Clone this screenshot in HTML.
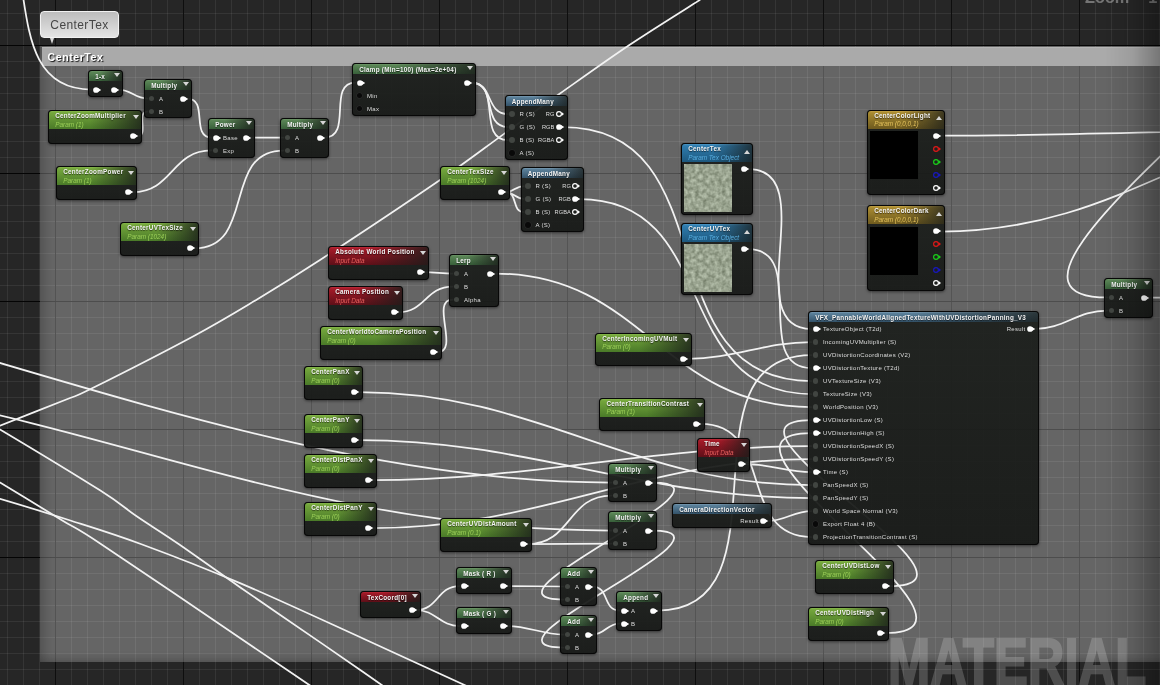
<!DOCTYPE html><html><head><meta charset="utf-8"><title>CenterTex material graph</title><style>
*{box-sizing:border-box;margin:0;padding:0}
html,body{width:1160px;height:685px;overflow:hidden;background:#262626}
body{position:relative;font-family:"Liberation Sans",sans-serif;color:#fff}
#root{position:absolute;left:0;top:0;width:1160px;height:685px;overflow:hidden;will-change:transform}
#bg{position:absolute;left:0;top:0;width:1160px;height:685px;
background-image:
linear-gradient(to bottom,#040404 1px,transparent 1px),linear-gradient(to right,#0e0e0e 1px,transparent 1px),
linear-gradient(to bottom,rgba(255,255,255,.072) 1px,transparent 1px),linear-gradient(to right,rgba(255,255,255,.072) 1px,transparent 1px);
background-size:100% 128px,128px 100%,100% 16px,16px 100%;
background-position:0 45px,55px 0,0 13px,7px 0}
#cm{position:absolute;left:40px;top:46px;width:1122px;height:616px;background:rgba(255,255,255,.295);
box-shadow:inset 14px 0 12px -10px rgba(0,0,0,.22),inset 0 -10px 10px -8px rgba(0,0,0,.22)}
#cmh{position:absolute;left:42px;top:47.4px;width:1119px;height:18.4px;background:#aaa;border-top:1px solid #b6b6b6;
font-weight:bold;font-size:10.6px;letter-spacing:.55px;line-height:18px;padding-left:5.5px;text-shadow:1px 1px 1px rgba(0,0,0,.9)}
#vg{position:absolute;left:1105px;top:0;width:55px;height:685px;background:linear-gradient(to right,rgba(0,0,0,0),rgba(0,0,0,.08) 50%,rgba(0,0,0,.30))}
#tip{position:absolute;left:40px;top:11px;width:79px;height:27px;border-radius:4px;border:1px solid #f2f2f2;
background:linear-gradient(#bdbdbd,#e4e4e4);color:#464646;font-size:12px;letter-spacing:.4px;line-height:27px;text-align:center}
#tipa{position:absolute;left:49.5px;top:38px;width:0;height:0;border-left:2.5px solid transparent;border-right:2.5px solid transparent;border-top:6px solid #d8d8d8}
#zoom{position:absolute;left:1085px;top:-11px;word-spacing:9px;font-size:16.3px;line-height:16px;font-weight:bold;color:rgba(255,255,255,.36);white-space:nowrap}
#wm{position:absolute;left:888px;top:629px;font-size:66px;font-weight:bold;color:#fff;-webkit-text-stroke:2.2px #fff;opacity:.19;white-space:nowrap;line-height:66px;transform-origin:0 0;transform:scaleX(.768)}
.n{position:absolute;border-radius:4px;background:linear-gradient(rgba(29,32,29,.94),rgba(23,25,23,.94));box-shadow:inset 0 0 0 1px rgba(6,6,6,.95),0 1px 3px rgba(0,0,0,.5);overflow:hidden}
.h{position:absolute;left:1px;top:1px;right:1px;border-radius:3px 3px 0 0;font-weight:bold;font-size:6.3px;line-height:9px;padding:1.1px 0 0 6.2px;white-space:nowrap;letter-spacing:.28px;text-shadow:0 1px 1px rgba(0,0,0,.6);color:#f4f4f4}
.h.s{padding-top:0}
.h i{display:block;font-weight:normal;font-size:6.4px;line-height:8px;letter-spacing:0;text-shadow:none;margin-top:.8px}
.g .h{background:linear-gradient(to right,rgba(26,29,26,0) 35%,rgba(26,29,26,.8) 100%),linear-gradient(#6f9a6a 0,#5a8556 12%,#38603a 100%)}
.p .h{background:linear-gradient(to right,rgba(26,29,26,0) 45%,rgba(26,29,26,.8) 100%),linear-gradient(#86b84a 0,#74a63c 10%,#4a7a28 100%)}
.p .h i{color:#9cd058}
.r .h{background:linear-gradient(to right,rgba(26,29,26,0) 40%,rgba(26,29,26,.8) 100%),linear-gradient(#c02a3a 0,#a41a28 10%,#5e0f18 100%)}
.r .h i{color:#e8605e}
.b .h{background:linear-gradient(to right,rgba(26,29,26,0) 45%,rgba(26,29,26,.75) 100%),linear-gradient(#4e98c6 0,#2f7cae 10%,#1d587e 100%)}
.b .h i{color:#58aee0}
.f .h{background:linear-gradient(to right,rgba(26,29,26,0) 45%,rgba(26,29,26,.75) 100%),linear-gradient(#7c9db4 0,#5b819b 12%,#34536a 100%)}
.y .h{background:linear-gradient(to right,rgba(26,29,26,0) 45%,rgba(26,29,26,.75) 100%),linear-gradient(#c4a244 0,#a88a30 10%,#6e5a1e 100%)}
.y .h i{color:#e4c25c}
.ar{position:absolute;width:0;height:0;border-left:3px solid transparent;border-right:3px solid transparent;border-top:4.5px solid #d6d6d6}
.ar.up{border-top:none;border-bottom:4.5px solid #d6d6d6}
.l{position:absolute;font-size:6px;line-height:8px;color:#dedede;white-space:nowrap;letter-spacing:.3px}
.lo{font-size:5.7px;letter-spacing:.1px}
.pin{position:absolute;width:5.8px;height:5.8px;border-radius:50%}
.ps{position:absolute;overflow:visible}
.c1{background:#fff}
.c1:after{content:"";position:absolute;left:4.6px;top:1px;border-top:2px solid transparent;border-bottom:2px solid transparent;border-left:3px solid #fff}
.c2{background:#414541}
.c0{background:#090909;box-shadow:0 0 0 .6px #2c2c2c}
.c3{background:transparent;border:1.1px solid #fff}
.c3:after{content:"";position:absolute;left:3.9px;top:.3px;border-top:1.6px solid transparent;border-bottom:1.6px solid transparent;border-left:2.6px solid #fff}
.cR,.cG,.cB{background:transparent;border:1.1px solid #e01818}
.cG{border-color:#1ad01a}
.cB{border-color:#1616b8}
.cR:after,.cG:after,.cB:after{content:"";position:absolute;left:3.9px;top:.3px;border-top:1.6px solid transparent;border-bottom:1.6px solid transparent;border-left:2.6px solid #e01818}
.cG:after{border-left-color:#1ad01a}
.cB:after{border-left-color:#1616b8}
.sw{position:absolute;left:3px;top:21.3px;width:48px;height:48px;background:#000}
.tx{position:absolute;left:3px;top:21.3px;width:48px;height:48px;background:#9aa48f;overflow:hidden}
svg{position:absolute;left:0;top:0}
</style></head><body>
<div id="root"><div id="bg"></div>
<div id="zoom">Zoom -1</div>
<div id="cm"></div><div id="cmh">CenterTex</div>
<div id="wm">MATERIAL</div>
<svg width="0" height="0"><symbol id="pf" viewBox="-4 -4 10 8"><circle r="2.85" fill="currentColor"/><path d="M2 -2.1L5.2 0L2 2.1z" fill="currentColor"/></symbol><symbol id="ph" viewBox="-4 -4 10 8"><circle r="2.4" fill="none" stroke="currentColor" stroke-width="1.15"/><path d="M2.6 -1.9L5 0L2.6 1.9z" fill="currentColor"/></symbol><filter id="tn" x="0" y="0" width="100%" height="100%" color-interpolation-filters="sRGB"><feTurbulence type="fractalNoise" baseFrequency=".26" numOctaves="2" seed="4"/><feColorMatrix values=".4 0 0 0 .40 .4 0 0 0 .44 .4 0 0 0 .36 0 0 0 0 1"/></filter></svg>
<svg width="1160" height="685" viewBox="0 0 1160 685" fill="none" stroke="#f2f2f2" stroke-width="1.75" stroke-linecap="round">
<path d="M118.5 89.5C131.2 89.5 134.8 98.5 147.5 98.5"/>
<path d="M137.5 136.2C149.1 136.2 135.9 111.5 147.5 111.5"/>
<path d="M187.5 98.5C208.5 98.5 190.5 137.5 211.5 137.5"/>
<path d="M132.5 192.2C172.7 192.2 171.3 150.5 211.5 150.5"/>
<path d="M250.5 137.5C261.5 137.5 272.5 137.5 283.5 137.5"/>
<path d="M194.5 248.2C256.7 248.2 221.3 150.5 283.5 150.5"/>
<path d="M324.5 137.5C353.2 137.5 326.8 82.5 355.5 82.5"/>
<path d="M471.0 82.5C493.8 82.5 485.2 114.0 508.0 114.0"/>
<path d="M471.0 82.5C498.2 82.5 480.8 127.0 508.0 127.0"/>
<path d="M471.0 82.5C502.5 82.5 476.5 140.0 508.0 140.0"/>
<path d="M505.5 192.2C513.7 192.2 515.8 186.0 524.0 186.0"/>
<path d="M505.5 192.2C513.9 192.2 515.6 199.0 524.0 199.0"/>
<path d="M505.5 192.2C518.3 192.2 511.2 212.0 524.0 212.0"/>
<path d="M424.5 272.2C434.3 272.2 442.7 273.5 452.5 273.5"/>
<path d="M398.5 312.2C425.1 312.2 425.9 286.5 452.5 286.5"/>
<path d="M437.5 352.2C460.1 352.2 429.9 299.5 452.5 299.5"/>
<path d="M416.0 610.0C438.5 610.0 437.0 586.0 459.5 586.0"/>
<path d="M416.0 610.0C435.8 610.0 439.7 626.0 459.5 626.0"/>
<path d="M507.5 586.0C526.3 586.0 544.7 586.5 563.5 586.5"/>
<path d="M507.5 626.0C529.0 626.0 542.0 634.5 563.5 634.5"/>
<path d="M592.5 586.5C609.5 586.5 602.5 610.5 619.5 610.5"/>
<path d="M592.5 634.5C605.2 634.5 606.8 623.5 619.5 623.5"/>
<path d="M652.5 482.5C753.4 482.5 462.6 599.5 563.5 599.5"/>
<path d="M652.5 530.5C753.4 530.5 462.6 647.5 563.5 647.5"/>
<path d="M527.5 544.2C571.7 544.2 567.3 495.5 611.5 495.5"/>
<path d="M527.5 544.2C555.7 544.2 583.3 543.5 611.5 543.5"/>
<path d="M748.5 169.2C822.8 169.2 737.2 329.0 811.5 329.0"/>
<path d="M687.5 358.8C734.4 358.8 764.6 342.0 811.5 342.0"/>
<path d="M657.5 610.5C794.0 610.5 675.0 355.0 811.5 355.0"/>
<path d="M748.5 249.2C809.1 249.2 750.9 368.0 811.5 368.0"/>
<path d="M563.0 127.0C730.5 127.0 644.0 381.0 811.5 381.0"/>
<path d="M579.5 199.0C721.8 199.0 669.2 394.0 811.5 394.0"/>
<path d="M494.5 273.5C644.7 273.5 661.3 407.0 811.5 407.0"/>
<path d="M889.5 586.2C1009.2 586.2 691.8 420.0 811.5 420.0"/>
<path d="M884.5 633.2C1018.3 633.2 677.7 433.0 811.5 433.0"/>
<path d="M372.5 480.2C530.2 480.2 653.8 446.0 811.5 446.0"/>
<path d="M372.5 528.2C541.9 528.2 642.1 459.0 811.5 459.0"/>
<path d="M745.5 464.2C770.1 464.2 786.9 472.0 811.5 472.0"/>
<path d="M358.5 392.2C540.4 392.2 629.6 485.0 811.5 485.0"/>
<path d="M358.5 440.2C528.8 440.2 641.2 498.0 811.5 498.0"/>
<path d="M767.5 521.0C785.5 521.0 793.5 511.0 811.5 511.0"/>
<path d="M700.8 423.8C775.4 423.8 736.9 537.0 811.5 537.0"/>
<path d="M1034.0 329.0C1064.7 329.0 1076.8 310.5 1107.5 310.5"/>
<path d="M-46.0 -100.0C63.0 -100.0 -17.5 89.5 91.5 89.5"/>
<path d="M-633.6 237.0C-218.4 237.0 196.3 482.5 611.5 482.5"/>
<path d="M-330.2 373.7C36.0 373.7 245.3 530.5 611.5 530.5"/>
<path d="M1148.5 297.5C1199.2 297.5 1249.3 298.0 1300.0 298.0"/>
<path d="M940.5 135.7C1074.0 135.7 1201.5 129.7 1335.0 129.7"/>
<path d="M940.5 231.5C1132.2 231.5 1207.3 114.8 1399.0 114.8"/>
<path d="M1302.9 -71.1C1496.6 -71.1 913.8 297.5 1107.5 297.5"/>
<path d="M0.0 425.6C10.8 421.3 49.7 406.2 65.0 400.0C80.3 393.8 70.3 399.1 91.6 388.5C112.9 377.9 165.4 351.2 193.0 336.4C220.6 321.5 235.8 312.1 257.0 299.4C278.2 286.7 289.5 279.9 320.0 260.0C350.5 240.1 409.5 200.9 440.0 180.0C470.5 159.1 483.0 149.0 503.0 134.6C523.0 120.2 538.9 108.4 560.0 93.5C581.1 78.6 606.1 60.6 629.4 45.0C652.7 29.4 688.1 7.5 699.8 0.0"/>
<path d="M-60.0 395.0C-50.0 400.7 -26.7 413.5 0.0 429.4C26.7 445.3 77.3 475.9 100.0 490.3C122.7 504.7 123.2 507.1 136.3 516.0C149.4 525.0 161.3 532.1 178.6 544.0C195.9 555.9 216.0 570.5 240.0 587.2C264.0 603.9 299.2 627.8 322.8 644.1C346.4 660.4 362.2 671.4 381.7 685.0C401.2 698.6 430.3 719.2 440.0 726.0"/>
<path d="M-60.0 447.0C-50.0 452.9 -20.2 470.2 0.0 482.4C20.2 494.6 44.7 509.7 61.5 520.0C78.3 530.3 71.2 524.3 100.9 544.0C130.7 563.7 205.3 614.5 240.0 638.0C274.7 661.5 289.3 671.5 309.3 685.0C329.3 698.5 351.6 713.3 360.0 719.0"/>
<path d="M-60.0 482.0C-50.0 484.8 -21.5 492.5 0.0 498.8C21.5 505.1 45.3 512.5 68.8 520.0C92.3 527.5 112.3 533.5 140.8 544.0C169.3 554.5 202.8 567.3 240.0 583.1C277.2 598.9 326.7 622.0 364.1 639.0C401.5 656.0 438.5 673.0 464.5 685.0C490.5 697.0 510.8 706.7 520.0 711.0"/>
</svg>
<div class="n g" style="left:88px;top:70px;width:35px;height:27px"><div class="h" style="height:10px">1-x</div><div class="ar" style="left:26px;top:3px"></div><svg class="ps" style="left:3.5px;top:15.5px;color:#fff" width="10" height="8"><use href="#pf"/></svg><svg class="ps" style="left:22.0px;top:15.5px;color:#fff" width="10" height="8"><use href="#pf"/></svg></div>
<div class="n g" style="left:144px;top:79px;width:48px;height:39px"><div class="h" style="height:10px">Multiply</div><div class="ar" style="left:39px;top:3px"></div><div class="pin c2" style="left:4.6px;top:16.6px"></div><div class="l" style="left:15px;top:15.5px">A</div><div class="pin c2" style="left:4.6px;top:29.6px"></div><div class="l" style="left:15px;top:28.5px">B</div><svg class="ps" style="left:35.0px;top:15.5px;color:#fff" width="10" height="8"><use href="#pf"/></svg></div>
<div class="n p" style="left:48px;top:110px;width:94px;height:33.5px"><div class="h s" style="height:18px">CenterZoomMultiplier<i>Param (1)</i></div><div class="ar" style="left:85.3px;top:5.3px"></div><svg class="ps" style="left:81.0px;top:22.2px;color:#fff" width="10" height="8"><use href="#pf"/></svg></div>
<div class="n g" style="left:208px;top:118px;width:47px;height:40px"><div class="h" style="height:10px">Power</div><div class="ar" style="left:38px;top:3px"></div><svg class="ps" style="left:3.5px;top:15.5px;color:#fff" width="10" height="8"><use href="#pf"/></svg><div class="l" style="left:15px;top:15.5px">Base</div><div class="pin c2" style="left:4.6px;top:29.6px"></div><div class="l" style="left:15px;top:28.5px">Exp</div><svg class="ps" style="left:34.0px;top:15.5px;color:#fff" width="10" height="8"><use href="#pf"/></svg></div>
<div class="n g" style="left:280px;top:118px;width:49px;height:40px"><div class="h" style="height:10px">Multiply</div><div class="ar" style="left:40px;top:3px"></div><div class="pin c2" style="left:4.6px;top:16.6px"></div><div class="l" style="left:15px;top:15.5px">A</div><div class="pin c2" style="left:4.6px;top:29.6px"></div><div class="l" style="left:15px;top:28.5px">B</div><svg class="ps" style="left:36.0px;top:15.5px;color:#fff" width="10" height="8"><use href="#pf"/></svg></div>
<div class="n p" style="left:56px;top:166px;width:81px;height:33.5px"><div class="h s" style="height:18px">CenterZoomPower<i>Param (1)</i></div><div class="ar" style="left:72.3px;top:5.3px"></div><svg class="ps" style="left:68.0px;top:22.2px;color:#fff" width="10" height="8"><use href="#pf"/></svg></div>
<div class="n p" style="left:120px;top:222px;width:79px;height:33.5px"><div class="h s" style="height:18px">CenterUVTexSize<i>Param (1024)</i></div><div class="ar" style="left:70.3px;top:5.3px"></div><svg class="ps" style="left:66.0px;top:22.2px;color:#fff" width="10" height="8"><use href="#pf"/></svg></div>
<div class="n g" style="left:352px;top:63px;width:123.5px;height:52.5px"><div class="h" style="height:10px">Clamp (Min=100) (Max=2e+04)</div><div class="ar" style="left:114.5px;top:3px"></div><svg class="ps" style="left:3.5px;top:15.5px;color:#fff" width="10" height="8"><use href="#pf"/></svg><div class="pin c0" style="left:4.6px;top:29.6px"></div><div class="l" style="left:15px;top:28.5px">Min</div><div class="pin c0" style="left:4.6px;top:42.6px"></div><div class="l" style="left:15px;top:41.5px">Max</div><svg class="ps" style="left:110.5px;top:15.5px;color:#fff" width="10" height="8"><use href="#pf"/></svg></div>
<div class="n f" style="left:504.5px;top:94.5px;width:63px;height:65px"><div class="h" style="height:10px">AppendMany</div><div class="pin c2" style="left:4.6px;top:16.6px"></div><div class="l" style="left:15px;top:15.5px">R (S)</div><div class="pin c2" style="left:4.6px;top:29.6px"></div><div class="l" style="left:15px;top:28.5px">G (S)</div><div class="pin c2" style="left:4.6px;top:42.6px"></div><div class="l" style="left:15px;top:41.5px">B (S)</div><div class="pin c0" style="left:4.6px;top:55.6px"></div><div class="l" style="left:15px;top:54.5px">A (S)</div><svg class="ps" style="left:50.0px;top:15.5px;color:#fff" width="10" height="8"><use href="#ph"/></svg><div class="l lo" style="right:13px;top:15.5px">RG</div><svg class="ps" style="left:50.0px;top:28.5px;color:#fff" width="10" height="8"><use href="#pf"/></svg><div class="l lo" style="right:13px;top:28.5px">RGB</div><svg class="ps" style="left:50.0px;top:41.5px;color:#fff" width="10" height="8"><use href="#ph"/></svg><div class="l lo" style="right:13px;top:41.5px">RGBA</div></div>
<div class="n p" style="left:440px;top:166px;width:70px;height:33.5px"><div class="h s" style="height:18px">CenterTexSize<i>Param (1024)</i></div><div class="ar" style="left:61.3px;top:5.3px"></div><svg class="ps" style="left:57.0px;top:22.2px;color:#fff" width="10" height="8"><use href="#pf"/></svg></div>
<div class="n f" style="left:520.5px;top:166.5px;width:63.5px;height:65px"><div class="h" style="height:10px">AppendMany</div><div class="pin c2" style="left:4.6px;top:16.6px"></div><div class="l" style="left:15px;top:15.5px">R (S)</div><div class="pin c2" style="left:4.6px;top:29.6px"></div><div class="l" style="left:15px;top:28.5px">G (S)</div><div class="pin c2" style="left:4.6px;top:42.6px"></div><div class="l" style="left:15px;top:41.5px">B (S)</div><div class="pin c0" style="left:4.6px;top:55.6px"></div><div class="l" style="left:15px;top:54.5px">A (S)</div><svg class="ps" style="left:50.5px;top:15.5px;color:#fff" width="10" height="8"><use href="#ph"/></svg><div class="l lo" style="right:13px;top:15.5px">RG</div><svg class="ps" style="left:50.5px;top:28.5px;color:#fff" width="10" height="8"><use href="#pf"/></svg><div class="l lo" style="right:13px;top:28.5px">RGB</div><svg class="ps" style="left:50.5px;top:41.5px;color:#fff" width="10" height="8"><use href="#ph"/></svg><div class="l lo" style="right:13px;top:41.5px">RGBA</div></div>
<div class="n r" style="left:328px;top:246px;width:101px;height:34px"><div class="h s" style="height:18px">Absolute World Position<i>Input Data</i></div><div class="ar" style="left:92.3px;top:5.3px"></div><svg class="ps" style="left:88.0px;top:22.2px;color:#fff" width="10" height="8"><use href="#pf"/></svg></div>
<div class="n g" style="left:449px;top:254px;width:50px;height:53px"><div class="h" style="height:10px">Lerp</div><div class="ar" style="left:41px;top:3px"></div><div class="pin c2" style="left:4.6px;top:16.6px"></div><div class="l" style="left:15px;top:15.5px">A</div><div class="pin c2" style="left:4.6px;top:29.6px"></div><div class="l" style="left:15px;top:28.5px">B</div><div class="pin c2" style="left:4.6px;top:42.6px"></div><div class="l" style="left:15px;top:41.5px">Alpha</div><svg class="ps" style="left:37.0px;top:15.5px;color:#fff" width="10" height="8"><use href="#pf"/></svg></div>
<div class="n r" style="left:328px;top:286px;width:75px;height:33.5px"><div class="h s" style="height:18px">Camera Position<i>Input Data</i></div><div class="ar" style="left:66.3px;top:5.3px"></div><svg class="ps" style="left:62.0px;top:22.2px;color:#fff" width="10" height="8"><use href="#pf"/></svg></div>
<div class="n p" style="left:320px;top:326px;width:122px;height:34px"><div class="h s" style="height:18px">CenterWorldtoCameraPosition<i>Param (0)</i></div><div class="ar" style="left:113.3px;top:5.3px"></div><svg class="ps" style="left:109.0px;top:22.2px;color:#fff" width="10" height="8"><use href="#pf"/></svg></div>
<div class="n p" style="left:304px;top:366px;width:59px;height:33.5px"><div class="h s" style="height:18px">CenterPanX<i>Param (0)</i></div><div class="ar" style="left:50.3px;top:5.3px"></div><svg class="ps" style="left:46.0px;top:22.2px;color:#fff" width="10" height="8"><use href="#pf"/></svg></div>
<div class="n p" style="left:304px;top:414px;width:59px;height:33.5px"><div class="h s" style="height:18px">CenterPanY<i>Param (0)</i></div><div class="ar" style="left:50.3px;top:5.3px"></div><svg class="ps" style="left:46.0px;top:22.2px;color:#fff" width="10" height="8"><use href="#pf"/></svg></div>
<div class="n p" style="left:304px;top:454px;width:73px;height:33.5px"><div class="h s" style="height:18px">CenterDistPanX<i>Param (0)</i></div><div class="ar" style="left:64.3px;top:5.3px"></div><svg class="ps" style="left:60.0px;top:22.2px;color:#fff" width="10" height="8"><use href="#pf"/></svg></div>
<div class="n p" style="left:304px;top:502px;width:73px;height:33.5px"><div class="h s" style="height:18px">CenterDistPanY<i>Param (0)</i></div><div class="ar" style="left:64.3px;top:5.3px"></div><svg class="ps" style="left:60.0px;top:22.2px;color:#fff" width="10" height="8"><use href="#pf"/></svg></div>
<div class="n p" style="left:440px;top:518px;width:92px;height:33.5px"><div class="h s" style="height:18px">CenterUVDistAmount<i>Param (0.1)</i></div><div class="ar" style="left:83.3px;top:5.3px"></div><svg class="ps" style="left:79.0px;top:22.2px;color:#fff" width="10" height="8"><use href="#pf"/></svg></div>
<div class="n g" style="left:608px;top:463px;width:49px;height:39px"><div class="h" style="height:10px">Multiply</div><div class="ar" style="left:40px;top:3px"></div><div class="pin c2" style="left:4.6px;top:16.6px"></div><div class="l" style="left:15px;top:15.5px">A</div><div class="pin c2" style="left:4.6px;top:29.6px"></div><div class="l" style="left:15px;top:28.5px">B</div><svg class="ps" style="left:36.0px;top:15.5px;color:#fff" width="10" height="8"><use href="#pf"/></svg></div>
<div class="n g" style="left:608px;top:511px;width:49px;height:39px"><div class="h" style="height:10px">Multiply</div><div class="ar" style="left:40px;top:3px"></div><div class="pin c2" style="left:4.6px;top:16.6px"></div><div class="l" style="left:15px;top:15.5px">A</div><div class="pin c2" style="left:4.6px;top:29.6px"></div><div class="l" style="left:15px;top:28.5px">B</div><svg class="ps" style="left:36.0px;top:15.5px;color:#fff" width="10" height="8"><use href="#pf"/></svg></div>
<div class="n g" style="left:456px;top:566.5px;width:56px;height:27px"><div class="h" style="height:10px">Mask ( R )</div><div class="ar" style="left:47px;top:3px"></div><svg class="ps" style="left:3.5px;top:15.5px;color:#fff" width="10" height="8"><use href="#pf"/></svg><svg class="ps" style="left:43.0px;top:15.5px;color:#fff" width="10" height="8"><use href="#pf"/></svg></div>
<div class="n g" style="left:456px;top:606.5px;width:56px;height:27px"><div class="h" style="height:10px">Mask ( G )</div><div class="ar" style="left:47px;top:3px"></div><svg class="ps" style="left:3.5px;top:15.5px;color:#fff" width="10" height="8"><use href="#pf"/></svg><svg class="ps" style="left:43.0px;top:15.5px;color:#fff" width="10" height="8"><use href="#pf"/></svg></div>
<div class="n r" style="left:360px;top:590.5px;width:60.5px;height:27.3px"><div class="h" style="height:10px">TexCoord[0]</div><div class="ar" style="left:51.5px;top:3px"></div><svg class="ps" style="left:47.5px;top:15.5px;color:#fff" width="10" height="8"><use href="#pf"/></svg></div>
<div class="n g" style="left:560px;top:567px;width:37px;height:39px"><div class="h" style="height:10px">Add</div><div class="ar" style="left:28px;top:3px"></div><div class="pin c2" style="left:4.6px;top:16.6px"></div><div class="l" style="left:15px;top:15.5px">A</div><div class="pin c2" style="left:4.6px;top:29.6px"></div><div class="l" style="left:15px;top:28.5px">B</div><svg class="ps" style="left:24.0px;top:15.5px;color:#fff" width="10" height="8"><use href="#pf"/></svg></div>
<div class="n g" style="left:560px;top:615px;width:37px;height:39px"><div class="h" style="height:10px">Add</div><div class="ar" style="left:28px;top:3px"></div><div class="pin c2" style="left:4.6px;top:16.6px"></div><div class="l" style="left:15px;top:15.5px">A</div><div class="pin c2" style="left:4.6px;top:29.6px"></div><div class="l" style="left:15px;top:28.5px">B</div><svg class="ps" style="left:24.0px;top:15.5px;color:#fff" width="10" height="8"><use href="#pf"/></svg></div>
<div class="n g" style="left:616px;top:591px;width:46px;height:40px"><div class="h" style="height:10px">Append</div><div class="ar" style="left:37px;top:3px"></div><svg class="ps" style="left:3.5px;top:15.5px;color:#fff" width="10" height="8"><use href="#pf"/></svg><div class="l" style="left:15px;top:15.5px">A</div><svg class="ps" style="left:3.5px;top:28.5px;color:#fff" width="10" height="8"><use href="#pf"/></svg><div class="l" style="left:15px;top:28.5px">B</div><svg class="ps" style="left:33.0px;top:15.5px;color:#fff" width="10" height="8"><use href="#pf"/></svg></div>
<div class="n b" style="left:681px;top:143px;width:72px;height:72px"><div class="h s" style="height:18px">CenterTex<i>Param Tex Object</i></div><div class="ar up" style="left:63.3px;top:6.9px"></div><div class="tx"><svg width="48" height="48" viewBox="0 0 48 48"><rect width="48" height="48" fill="#fff" filter="url(#tn)"/></svg></div><svg class="ps" style="left:59.0px;top:22.2px;color:#fff" width="10" height="8"><use href="#pf"/></svg></div>
<div class="n b" style="left:681px;top:223px;width:72px;height:72px"><div class="h s" style="height:18px">CenterUVTex<i>Param Tex Object</i></div><div class="ar up" style="left:63.3px;top:6.9px"></div><div class="tx"><svg width="48" height="48" viewBox="0 0 48 48"><rect width="48" height="48" fill="#fff" filter="url(#tn)"/></svg></div><svg class="ps" style="left:59.0px;top:22.2px;color:#fff" width="10" height="8"><use href="#pf"/></svg></div>
<div class="n y" style="left:867px;top:109.5px;width:78px;height:85px"><div class="h s" style="height:18px">CenterColorLight<i>Param (0,0,0,1)</i></div><div class="ar up" style="left:69.3px;top:6.9px"></div><div class="sw"></div><svg class="ps" style="left:65.0px;top:22.2px;color:#fff" width="10" height="8"><use href="#pf"/></svg><svg class="ps" style="left:65.0px;top:35.2px;color:#e01818" width="10" height="8"><use href="#ph"/></svg><svg class="ps" style="left:65.0px;top:48.2px;color:#1ad01a" width="10" height="8"><use href="#ph"/></svg><svg class="ps" style="left:65.0px;top:61.2px;color:#1818c0" width="10" height="8"><use href="#ph"/></svg><svg class="ps" style="left:65.0px;top:74.2px;color:#fff" width="10" height="8"><use href="#ph"/></svg></div>
<div class="n y" style="left:867px;top:205.3px;width:78px;height:85.5px"><div class="h s" style="height:18px">CenterColorDark<i>Param (0,0,0,1)</i></div><div class="ar up" style="left:69.3px;top:6.9px"></div><div class="sw"></div><svg class="ps" style="left:65.0px;top:22.2px;color:#fff" width="10" height="8"><use href="#pf"/></svg><svg class="ps" style="left:65.0px;top:35.2px;color:#e01818" width="10" height="8"><use href="#ph"/></svg><svg class="ps" style="left:65.0px;top:48.2px;color:#1ad01a" width="10" height="8"><use href="#ph"/></svg><svg class="ps" style="left:65.0px;top:61.2px;color:#1818c0" width="10" height="8"><use href="#ph"/></svg><svg class="ps" style="left:65.0px;top:74.2px;color:#fff" width="10" height="8"><use href="#ph"/></svg></div>
<div class="n g" style="left:1104px;top:278px;width:49px;height:40px"><div class="h" style="height:10px">Multiply</div><div class="ar" style="left:40px;top:3px"></div><div class="pin c2" style="left:4.6px;top:16.6px"></div><div class="l" style="left:15px;top:15.5px">A</div><div class="pin c2" style="left:4.6px;top:29.6px"></div><div class="l" style="left:15px;top:28.5px">B</div><svg class="ps" style="left:36.0px;top:15.5px;color:#fff" width="10" height="8"><use href="#pf"/></svg></div>
<div class="n f" style="left:808px;top:310.5px;width:230.5px;height:234.5px"><div class="h" style="height:10px">VFX_PannableWorldAlignedTextureWithUVDistortionPanning_V3</div><svg class="ps" style="left:3.5px;top:14.5px;color:#fff" width="10" height="8"><use href="#pf"/></svg><div class="l" style="left:15px;top:14.5px">TextureObject (T2d)</div><div class="pin c2" style="left:4.6px;top:28.6px"></div><div class="l" style="left:15px;top:27.5px">IncomingUVMultiplier (S)</div><div class="pin c2" style="left:4.6px;top:41.6px"></div><div class="l" style="left:15px;top:40.5px">UVDistortionCoordinates (V2)</div><svg class="ps" style="left:3.5px;top:53.5px;color:#fff" width="10" height="8"><use href="#pf"/></svg><div class="l" style="left:15px;top:53.5px">UVDistortionTexture (T2d)</div><div class="pin c2" style="left:4.6px;top:67.6px"></div><div class="l" style="left:15px;top:66.5px">UVTextureSize (V3)</div><div class="pin c2" style="left:4.6px;top:80.6px"></div><div class="l" style="left:15px;top:79.5px">TextureSize (V3)</div><div class="pin c2" style="left:4.6px;top:93.6px"></div><div class="l" style="left:15px;top:92.5px">WorldPosition (V3)</div><svg class="ps" style="left:3.5px;top:105.5px;color:#fff" width="10" height="8"><use href="#pf"/></svg><div class="l" style="left:15px;top:105.5px">UVDistortionLow (S)</div><svg class="ps" style="left:3.5px;top:118.5px;color:#fff" width="10" height="8"><use href="#pf"/></svg><div class="l" style="left:15px;top:118.5px">UVDistortionHigh (S)</div><div class="pin c2" style="left:4.6px;top:132.6px"></div><div class="l" style="left:15px;top:131.5px">UVDistortionSpeedX (S)</div><div class="pin c2" style="left:4.6px;top:145.6px"></div><div class="l" style="left:15px;top:144.5px">UVDistortionSpeedY (S)</div><svg class="ps" style="left:3.5px;top:157.5px;color:#fff" width="10" height="8"><use href="#pf"/></svg><div class="l" style="left:15px;top:157.5px">Time (S)</div><div class="pin c2" style="left:4.6px;top:171.6px"></div><div class="l" style="left:15px;top:170.5px">PanSpeedX (S)</div><div class="pin c2" style="left:4.6px;top:184.6px"></div><div class="l" style="left:15px;top:183.5px">PanSpeedY (S)</div><div class="pin c2" style="left:4.6px;top:197.6px"></div><div class="l" style="left:15px;top:196.5px">World Space Normal (V3)</div><div class="pin c0" style="left:4.6px;top:210.6px"></div><div class="l" style="left:15px;top:209.5px">Export Float 4 (B)</div><div class="pin c2" style="left:4.6px;top:223.6px"></div><div class="l" style="left:15px;top:222.5px">ProjectionTransitionContrast (S)</div><svg class="ps" style="left:217.5px;top:14.5px;color:#fff" width="10" height="8"><use href="#pf"/></svg><div class="l" style="right:13px;top:14.5px">Result</div></div>
<div class="n p" style="left:595px;top:332.6px;width:97px;height:33.5px"><div class="h s" style="height:18px">CenterIncomingUVMult<i>Param (0)</i></div><div class="ar" style="left:88.3px;top:5.3px"></div><svg class="ps" style="left:84.0px;top:22.2px;color:#fff" width="10" height="8"><use href="#pf"/></svg></div>
<div class="n p" style="left:599.3px;top:397.6px;width:106px;height:33.5px"><div class="h s" style="height:18px">CenterTransitionContrast<i>Param (1)</i></div><div class="ar" style="left:97.3px;top:5.3px"></div><svg class="ps" style="left:93.0px;top:22.2px;color:#fff" width="10" height="8"><use href="#pf"/></svg></div>
<div class="n r" style="left:697px;top:438px;width:53px;height:33.5px"><div class="h s" style="height:18px">Time<i>Input Data</i></div><div class="ar" style="left:44.3px;top:5.3px"></div><svg class="ps" style="left:40.0px;top:22.2px;color:#fff" width="10" height="8"><use href="#pf"/></svg></div>
<div class="n f" style="left:672px;top:503px;width:100px;height:25px"><div class="h" style="height:10px">CameraDirectionVector</div><svg class="ps" style="left:87.0px;top:14.0px;color:#fff" width="10" height="8"><use href="#pf"/></svg><div class="l" style="right:13px;top:14px">Result</div></div>
<div class="n p" style="left:815px;top:560px;width:79px;height:33.5px"><div class="h s" style="height:18px">CenterUVDistLow<i>Param (0)</i></div><div class="ar" style="left:70.3px;top:5.3px"></div><svg class="ps" style="left:66.0px;top:22.2px;color:#fff" width="10" height="8"><use href="#pf"/></svg></div>
<div class="n p" style="left:808px;top:607px;width:81px;height:33.5px"><div class="h s" style="height:18px">CenterUVDistHigh<i>Param (0)</i></div><div class="ar" style="left:72.3px;top:5.3px"></div><svg class="ps" style="left:68.0px;top:22.2px;color:#fff" width="10" height="8"><use href="#pf"/></svg></div>
<div id="vg"></div><div id="tip">CenterTex</div><div id="tipa"></div></div>
</body></html>
